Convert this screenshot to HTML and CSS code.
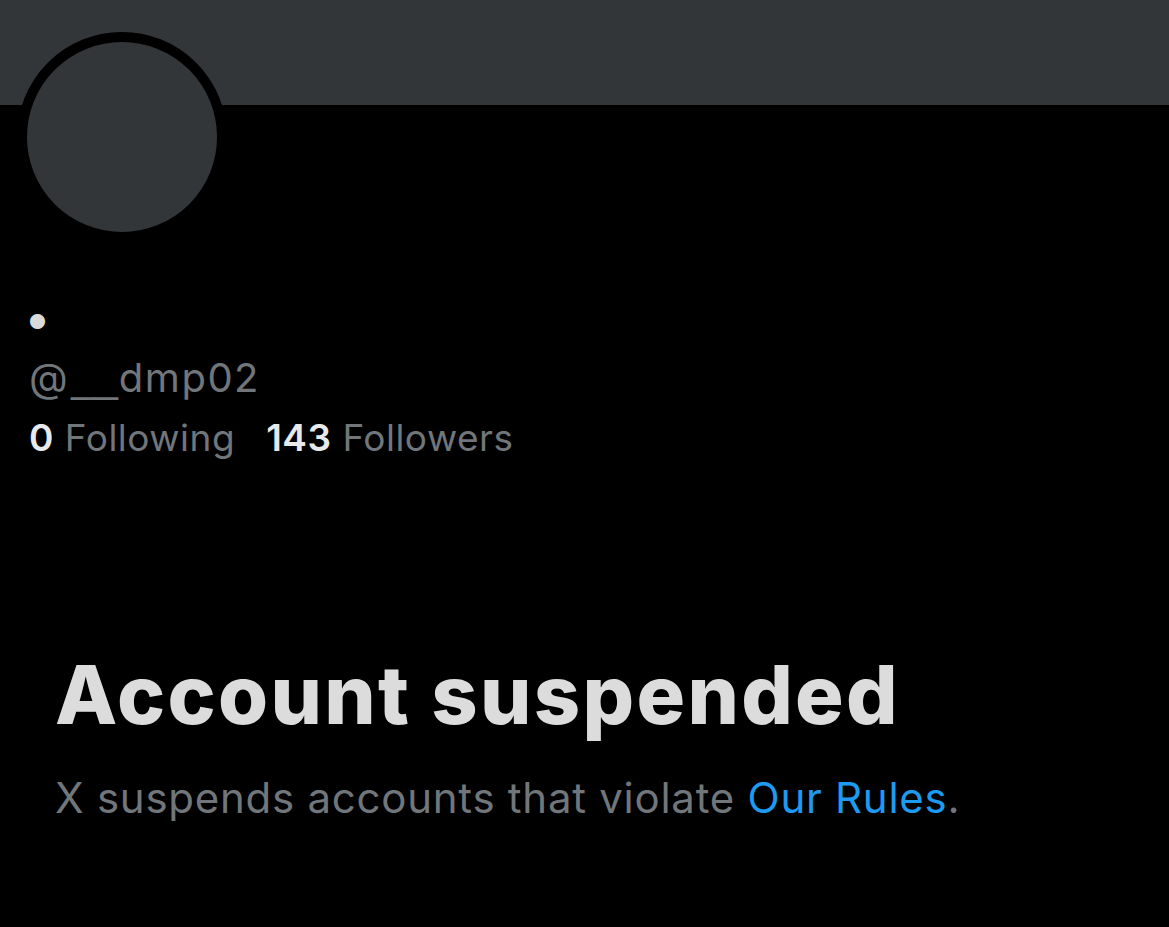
FILE: index.html
```html
<!DOCTYPE html>
<html lang="en">
<head>
<meta charset="utf-8">
<title>@__dmp02</title>
<link rel="stylesheet" href="styles.css">
</head>
<body>
<div class="page">
  <header class="banner"></header>
  <section class="profile">
    <div class="avatar-row">
      <div class="avatar"></div>
    </div>
    <div class="name">•</div>
    <div class="handle">@<span class="us">__</span>dmp02</div>
    <div class="stats">
      <span class="stat"><b>0</b> Following</span>
      <span class="stat"><b>143</b> Followers</span>
    </div>
  </section>
  <section class="notice">
    <h1 class="title">Account suspended</h1>
    <p class="desc">X suspends accounts that violate <a href="#" class="link">Our Rules</a>.</p>
  </section>
</div>
</body>
</html>
```
FILE: styles.css
```css
html, body {
  margin: 0;
  padding: 0;
  background: #000;
}
body {
  font-family: Inter, "Noto Sans", sans-serif;
  color: #e7e9ea;
  width: 1169px;
  height: 927px;
  overflow: hidden;
}
.page {
  display: flex;
  flex-direction: column;
}
.banner {
  height: 105px;
  background: #333639;
}
.profile {
  display: flex;
  flex-direction: column;
  padding: 0 0 0 29px;
}
.avatar-row {
  height: 203px;
  margin-left: -12px;
}
.avatar {
  width: 190px;
  height: 190px;
  border-radius: 50%;
  background: #333639;
  border: 10px solid #000;
  margin-top: -73px;
}
.name {
  height: 39px;
  font-size: 48px;
  line-height: 20px;
  color: #dadada;
  margin-left: -5px;
}
.handle {
  font-size: 40px;
  line-height: 61px;
  color: #71767b;
  letter-spacing: 1.5px;
}
.handle .us {
  font-family: "Liberation Sans", Arial, sans-serif;
  font-size: 42px;
  letter-spacing: 0;
  margin: 0 1px 0 2px;
}
.stats {
  display: flex;
  gap: 31px;
  font-size: 37px;
  line-height: 60px;
  color: #71767b;
  letter-spacing: 0.5px;
}
.stat b {
  color: #e7e9ea;
  font-weight: 600;
}
.notice {
  padding: 178px 0 0 55px;
}
.title {
  margin: 0;
  font-size: 81px;
  line-height: 98px;
  font-weight: 800;
  color: #dcdcdc;
  letter-spacing: 2.3px;
}
.desc {
  margin: 29px 0 0;
  font-size: 42px;
  line-height: 50px;
  color: #71767b;
  letter-spacing: 0.74px;
}
.link {
  color: #1d9bf0;
  text-decoration: none;
}
```
